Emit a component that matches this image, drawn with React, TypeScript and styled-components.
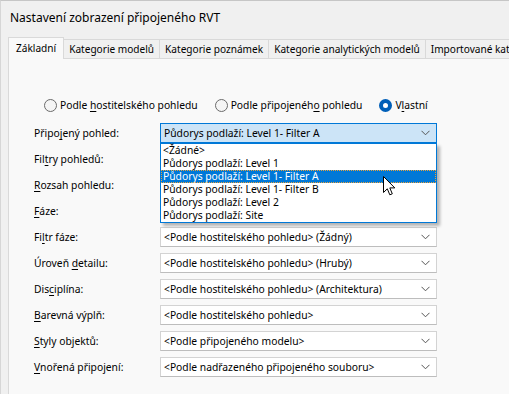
import React from "react";
import styled, { createGlobalStyle } from "styled-components";

const GlobalStyle = createGlobalStyle`
    html, body {
        margin: 0;
        padding: 0;
        background: #f0f0f0;
    }
    body {
        font-family: "Noto Sans", "Open Sans", sans-serif;
        font-size: 10.3px;
        color: #000;
    }
`;

const Window = styled.div`
    width: 509px;
    height: 394px;
    box-sizing: border-box;
    display: flex;
    flex-direction: column;
    background: #f0f0f0;
    border-top: 1px solid #c6c6c6;
    border-left: 1px solid #d6d6d6;
    overflow: hidden;
    position: relative;
`;

const TitleBar = styled.div`
    height: 33px;
    display: flex;
    align-items: center;
    padding-left: 9px;
    font-size: 12px;
    white-space: nowrap;
`;

const TabStrip = styled.div`
    height: 24px;
    margin-left: 7px;
    display: flex;
    align-items: flex-end;
    white-space: nowrap;
`;

const Tab = styled.div<{ $active?: boolean }>`
    box-sizing: border-box;
    height: ${(p) => (p.$active ? "22px" : "19px")};
    padding: ${(p) => (p.$active ? "0 7px 1px" : "0 5px")};
    display: flex;
    align-items: center;
    font-size: 10.1px;
    border: 1px solid #d9d9d9;
    border-bottom: none;
    margin-left: ${(p) => (p.$active ? "0" : "-1px")};
    background: ${(p) => (p.$active ? "#f9f9f9" : "#f0f0f0")};
    position: relative;
    z-index: ${(p) => (p.$active ? 1 : 0)};
    margin-bottom: ${(p) => (p.$active ? "-1px" : "0")};
    flex-shrink: 0;
`;

const Panel = styled.div`
    flex: 1;
    margin-left: 7px;
    background: #f9f9f9;
    border-top: 1px solid #d9d9d9;
    border-left: 1px solid #d9d9d9;
    padding-top: 38px;
`;

const RadioRow = styled.div`
    display: flex;
    align-items: center;
    height: 14px;
    margin-top: 1px;
    padding-left: 35px;
    gap: 17px;
    white-space: nowrap;
`;

const RadioOption = styled.label`
    display: flex;
    align-items: center;
    gap: 3px;
`;

const RadioDot = styled.span<{ $checked?: boolean }>`
    box-sizing: border-box;
    width: 13px;
    height: 13px;
    border-radius: 50%;
    border: ${(p) => (p.$checked ? "4px solid #005fb8" : "1px solid #6b6b6b")};
    background: ${(p) => (p.$checked ? "#ffffff" : "#f5f5f5")};
`;

const Form = styled.div`
    display: grid;
    grid-template-columns: 126px 277px;
    grid-auto-rows: 20px;
    row-gap: 6px;
    margin-top: 11px;
    padding-left: 25px;
`;

const Label = styled.div`
    display: flex;
    align-items: center;
    white-space: nowrap;
`;

const Combo = styled.div<{ $open?: boolean }>`
    position: relative;
    box-sizing: border-box;
    display: flex;
    align-items: center;
    padding-left: 3px;
    background: ${(p) => (p.$open ? "#cce4f7" : "#ffffff")};
    border: 1px solid ${(p) => (p.$open ? "#0078d7" : "#d3d3d3")};
    border-bottom-color: ${(p) => (p.$open ? "#0078d7" : "#bdbdbd")};
    white-space: nowrap;
    z-index: ${(p) => (p.$open ? 2 : 0)};
`;

const Chevron = styled.svg`
    position: absolute;
    right: 6px;
    top: 50%;
    margin-top: -3px;
`;

const DropList = styled.div`
    position: absolute;
    top: 19px;
    left: -1px;
    right: -1px;
    box-sizing: border-box;
    background: #ffffff;
    border: 1px solid #0078d7;
    box-shadow: 3px 3px 3px rgba(0, 0, 0, 0.28);
`;

const DropItem = styled.div<{ $selected?: boolean }>`
    height: 13px;
    line-height: 13px;
    padding-left: 2px;
    background: ${(p) => (p.$selected ? "#0078d7" : "transparent")};
    color: ${(p) => (p.$selected ? "#ffffff" : "#000000")};
    outline: ${(p) => (p.$selected ? "1px dotted #e9a23b" : "none")};
    outline-offset: -1px;
`;

const Cursor = styled.svg`
    position: absolute;
    left: 382px;
    top: 175px;
    z-index: 5;
`;

const Key = styled.span`
    text-decoration: underline;
    text-underline-offset: 2px;
`;

const ChevronIcon = () => (
    <Chevron width="9" height="6" viewBox="0 0 9 6">
        <path d="M0.5 0.8 L4.5 4.8 L8.5 0.8" fill="none" stroke="#555" strokeWidth="1" />
    </Chevron>
);

const lm = (before: string, key: string, after: string) => (
    <span>
        {before}
        <Key>{key}</Key>
        {after}
    </span>
);

const options = [
    "<Žádné>",
    "Půdorys podlaží: Level 1",
    "Půdorys podlaží: Level 1- Filter A",
    "Půdorys podlaží: Level 1- Filter B",
    "Půdorys podlaží: Level 2",
    "Půdorys podlaží: Site",
];

const rows: { label: React.ReactNode; value: string }[] = [
    { label: lm("Fi", "l", "tr fáze:"), value: "<Podle hostitelského pohledu> (Žádný)" },
    { label: lm("Úroveň ", "d", "etailu:"), value: "<Podle hostitelského pohledu> (Hrubý)" },
    { label: lm("Dis", "c", "iplína:"), value: "<Podle hostitelského pohledu> (Architektura)" },
    { label: lm("", "B", "arevná výplň:"), value: "<Podle hostitelského pohledu>" },
    { label: lm("", "S", "tyly objektů:"), value: "<Podle připojeného modelu>" },
    { label: lm("", "V", "nořená připojení:"), value: "<Podle nadřazeného připojeného souboru>" },
];

export default function App() {
    return (
        <>
            <GlobalStyle />
            <Window>
                <TitleBar>Nastavení zobrazení připojeného RVT</TitleBar>
                <TabStrip>
                    <Tab $active>Základní</Tab>
                    <Tab>Kategorie modelů</Tab>
                    <Tab>Kategorie poznámek</Tab>
                    <Tab>Kategorie analytických modelů</Tab>
                    <Tab>Importované kategorie</Tab>
                </TabStrip>
                <Panel>
                    <RadioRow>
                        <RadioOption>
                            <RadioDot />
                            <span>Podle {lm("", "h", "ostitelského")} pohledu</span>
                        </RadioOption>
                        <RadioOption>
                            <RadioDot />
                            <span>Podle {lm("připojenéh", "o", "")} pohledu</span>
                        </RadioOption>
                        <RadioOption>
                            <RadioDot $checked />
                            {lm("V", "l", "astní")}
                        </RadioOption>
                    </RadioRow>
                    <Form>
                        <Label>{lm("Připo", "j", "ený pohled:")}</Label>
                        <Combo $open>
                            <span>Půdorys podlaží: Level 1- Filter A</span>
                            <ChevronIcon />
                            <DropList>
                                {options.map((o, i) => (
                                    <DropItem key={o} $selected={i === 2}>
                                        {o}
                                    </DropItem>
                                ))}
                            </DropList>
                        </Combo>
                        <Label>{lm("Fil", "t", "ry pohledů:")}</Label>
                        <Combo />
                        <Label>{lm("", "R", "ozsah pohledu:")}</Label>
                        <Combo />
                        <Label>{lm("", "F", "áze:")}</Label>
                        <Combo />
                        {rows.map((r, i) => (
                            <React.Fragment key={i}>
                                <Label>{r.label}</Label>
                                <Combo>
                                    <span>{r.value}</span>
                                    <ChevronIcon />
                                </Combo>
                            </React.Fragment>
                        ))}
                    </Form>
                </Panel>
                <Cursor width="13" height="21" viewBox="0 0 13 21">
                    <path
                        d="M0.5 0.5 L0.5 16.5 L4.3 12.8 L6.8 18.8 L9.3 17.8 L6.8 11.9 L11.8 11.9 Z"
                        fill="#ffffff"
                        stroke="#000000"
                        strokeWidth="1"
                        strokeLinejoin="round"
                    />
                </Cursor>
            </Window>
        </>
    );
}
